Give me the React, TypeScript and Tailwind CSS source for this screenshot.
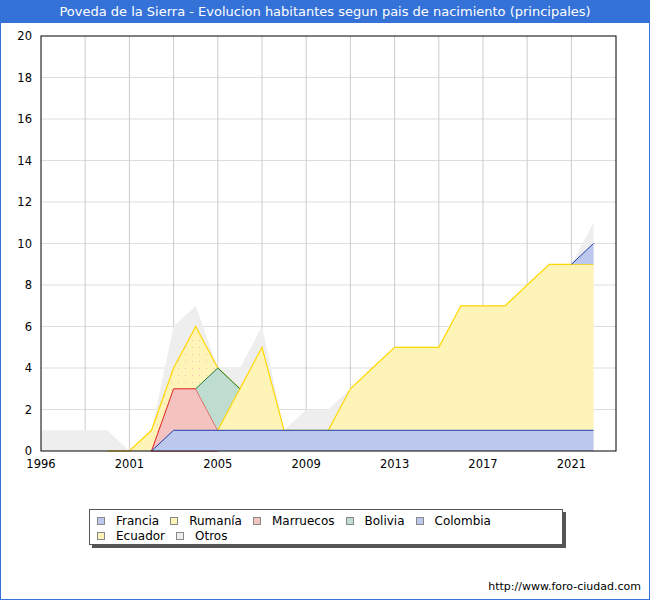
const X0 = 40, XS = 22.1, Y0 = 450, YS = 20.75;
const idx = (y: number) => (y === 1996 ? 0 : y - 1997);
const px = (y: number) => X0 + idx(y) * XS;
const py = (v: number) => Y0 - v * YS;
const pts = (a: [number, number][]) => a.map(([y, v]) => `${px(y).toFixed(1)},${py(v).toFixed(1)}`).join(" ");
const yrs = [1996, ...Array.from({ length: 25 }, (_, i) => 1998 + i)];
const greyV = [1, 1, 1, 1, 0, 1, 6, 7, 4, 4, 6, 1, 2, 2, 3, 4, 5, 5, 5, 7, 7, 7, 8, 9, 9, 11];
const yelV = [0, 0, 0, 0, 0, 1, 4, 6, 4, 3, 5, 1, 1, 1, 3, 4, 5, 5, 5, 7, 7, 7, 8, 9, 9, 9];
const area = (vals: number[], from: number) => {
  const a: [number, number][] = yrs.map((y, i) => [y, vals[i]] as [number, number]).filter(([y]) => y >= from);
  return { fill: pts([...a, [2022, 0], [from, 0]]), line: pts(a) };
};
const grey = area(greyV, 1996);
const yel = area(yelV, 2000);
const legend = [
  ["Francia", "#bcc8ee"], ["Rumanía", "#fff4b8"], ["Marruecos", "#f4c2bf"], ["Bolivia", "#bfdcd0"],
  ["Colombia", "#bcc8ee"], ["Ecuador", "#fff4b8"], ["Otros", "#eeeeee"],
];
export default function App() {
  const font = { fontFamily: "'DejaVu Sans', sans-serif" };
  return (
    <div className="w-[650px] h-[600px] bg-white border border-[#3572d8] flex flex-col relative" style={font}>
      <div className="h-[22px] bg-[#3572d8] text-white text-[13px] flex items-center justify-center">
        Poveda de la Sierra - Evolucion habitantes segun pais de nacimiento (principales)
      </div>
      <svg width="648" height="480" className="absolute left-0 top-0" style={font}>
        <defs>
          <pattern id="dots" width="7" height="7" patternUnits="userSpaceOnUse">
            <rect width="7" height="7" fill="#fff4b8" />
            <rect x="2" y="3" width="1" height="1" fill="#f4b8b8" />
          </pattern>
        </defs>
        {[2, 4, 6, 8, 10, 12, 14, 16, 18].map((v) => (
          <line key={v} x1={X0} x2={615} y1={py(v)} y2={py(v)} stroke="#dddddd" />
        ))}
        {Array.from({ length: 12 }, (_, i) => X0 + (i + 1) * 2 * XS).map((x) => (
          <line key={x} x1={x} x2={x} y1={35} y2={450} stroke="#cccccc" />
        ))}
        <polygon points={grey.fill} fill="#eeeeee" />
        <polygon points={yel.fill} fill="#fff4b8" />
        <polygon points={pts([[2002, 1], [2003, 4], [2004, 6], [2005, 4], [2005, 1], [2004, 3], [2003, 3], [2002, 0]])} fill="url(#dots)" />
        <polyline points={yel.line} fill="none" stroke="#ffd700" strokeWidth="1.2" />
        <polygon points={pts([[2002, 0], [2003, 3], [2004, 3], [2005, 1], [2005, 0]])} fill="#f4c2bf" stroke="#e02020" strokeWidth="1" />
        <polygon points={pts([[2004, 3], [2005, 4], [2006, 3], [2005, 1]])} fill="#bfdcd0" />
        <polyline points={pts([[2004, 3], [2005, 4], [2006, 3]])} fill="none" stroke="#1a7a3a" />
        <polyline points={pts([[2005, 1], [2006, 3]])} fill="none" stroke="#ffd700" strokeWidth="1.2" />
        <polygon points={pts([[2002, 0], [2003, 1], [2022, 1], [2022, 0]])} fill="#bcc8ee" />
        <polyline points={pts([[2002, 0], [2003, 1], [2022, 1]])} fill="none" stroke="#2040b0" />
        <polygon points={pts([[2021, 9], [2022, 10], [2022, 9]])} fill="#bcc8ee" />
        <polyline points={pts([[2021, 9], [2022, 10]])} fill="none" stroke="#2040b0" />
        <rect x={X0} y={35} width={575} height={415} fill="none" stroke="#000" />
        {[0, 2, 4, 6, 8, 10, 12, 14, 16, 18, 20].map((v) => (
          <text key={v} x={31} y={py(v) + 4} fontSize="11.5" textAnchor="end" fill="#000">{v}</text>
        ))}
        {[1996, 2001, 2005, 2009, 2013, 2017, 2021].map((y) => (
          <text key={y} x={px(y)} y={467} fontSize="11.5" textAnchor="middle" fill="#000">{y}</text>
        ))}
      </svg>
      <div className="absolute left-[88px] top-[508px] w-[474px] h-[36px] bg-white border border-[#555] shadow-[3px_3px_0_#555] px-[4px] pt-[3px] text-[12px] leading-[14px] text-black flex flex-wrap">
        {legend.map(([n, c]) => (
          <div key={n} className="flex items-center mr-[8px]">
            <span className="w-[8px] h-[8px] border border-[#888] mx-[3px] mr-[11px]" style={{ background: c }} />
            {n}
          </div>
        ))}
      </div>
      <div className="absolute right-[8px] top-[578px] text-[11px] text-black">http://www.foro-ciudad.com</div>
    </div>
  );
}
